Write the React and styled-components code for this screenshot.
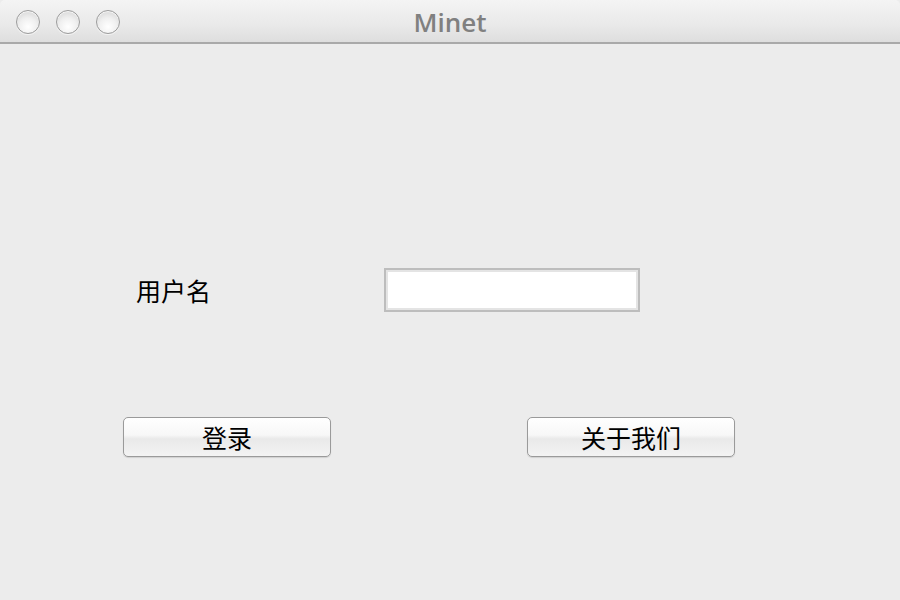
import React from "react"
import styled, { createGlobalStyle } from "styled-components"

const Global = createGlobalStyle`
  html, body {
    margin: 0;
    padding: 0;
    background: #ececec;
  }
  * {
    box-sizing: border-box;
  }
`

const App = () => {
  return (
    <>
      <Global />
      <Window>
        <TitleBar>
          <Lights>
            <Light />
            <Light />
            <Light />
          </Lights>
          <Title>Minet</Title>
        </TitleBar>
        <Content>
          <FieldRow>
            <Label>用户名</Label>
            <Input type="text" />
          </FieldRow>
          <ButtonRow>
            <Button>登录</Button>
            <Button>关于我们</Button>
          </ButtonRow>
        </Content>
      </Window>
    </>
  )
}

const Window = styled.div`
  width: 900px;
  height: 600px;
  display: flex;
  flex-direction: column;
  background: #ececec;
  overflow: hidden;
`

const TitleBar = styled.div`
  position: relative;
  height: 44px;
  flex-shrink: 0;
  display: flex;
  align-items: center;
  justify-content: center;
  background: linear-gradient(#f4f4f4, #e9e9e9 60%, #dedede);
  border-bottom: 2px solid #a9a9a9;
  border-radius: 5px 5px 0 0;
`

const Lights = styled.div`
  position: absolute;
  left: 16px;
  top: 10px;
  display: flex;
  gap: 16px;
`

const Light = styled.span`
  width: 24px;
  height: 24px;
  border-radius: 50%;
  border: 1px solid #9c9c9c;
  background: radial-gradient(circle at 50% 72%, #ffffff 0%, #f0f0f0 45%, #cfcfcf 100%);
  box-shadow: inset 0 1px 1px rgba(255, 255, 255, 0.9), 0 1px 0 rgba(255, 255, 255, 0.6);
`

const Title = styled.span`
  font-family: "Open Sans", "DejaVu Sans", sans-serif;
  font-size: 26px;
  font-weight: 600;
  color: #808080;
  margin-top: 2px;
`

const Content = styled.div`
  display: flex;
  flex-direction: column;
  padding: 224px 0 0 0;
`

const FieldRow = styled.div`
  display: flex;
  align-items: center;
  padding-left: 136px;
  height: 44px;
`

const Label = styled.span`
  width: 248px;
  font-family: "Noto Sans CJK SC", sans-serif;
  font-size: 25px;
  color: #000;
  line-height: 1;
`

const Input = styled.input`
  width: 256px;
  height: 44px;
  margin: 0;
  background: #fff;
  border: 2px solid #bdbdbd;
  box-shadow: inset 0 0 0 2px #e4e4e4;
  outline: none;
`

const ButtonRow = styled.div`
  display: flex;
  gap: 196px;
  padding-left: 123px;
  margin-top: 105px;
`

const Button = styled.button`
  width: 208px;
  height: 40px;
  margin: 0;
  padding: 0;
  border: 1px solid #9a9a9a;
  border-radius: 5px;
  background: linear-gradient(#ffffff, #f7f7f7 45%, #e9e9e9 55%, #f3f3f3);
  box-shadow: 0 1px 1px rgba(0, 0, 0, 0.12);
  font-family: "Noto Sans CJK SC", sans-serif;
  font-size: 25px;
  line-height: 1;
  color: #000;
`

export default App
